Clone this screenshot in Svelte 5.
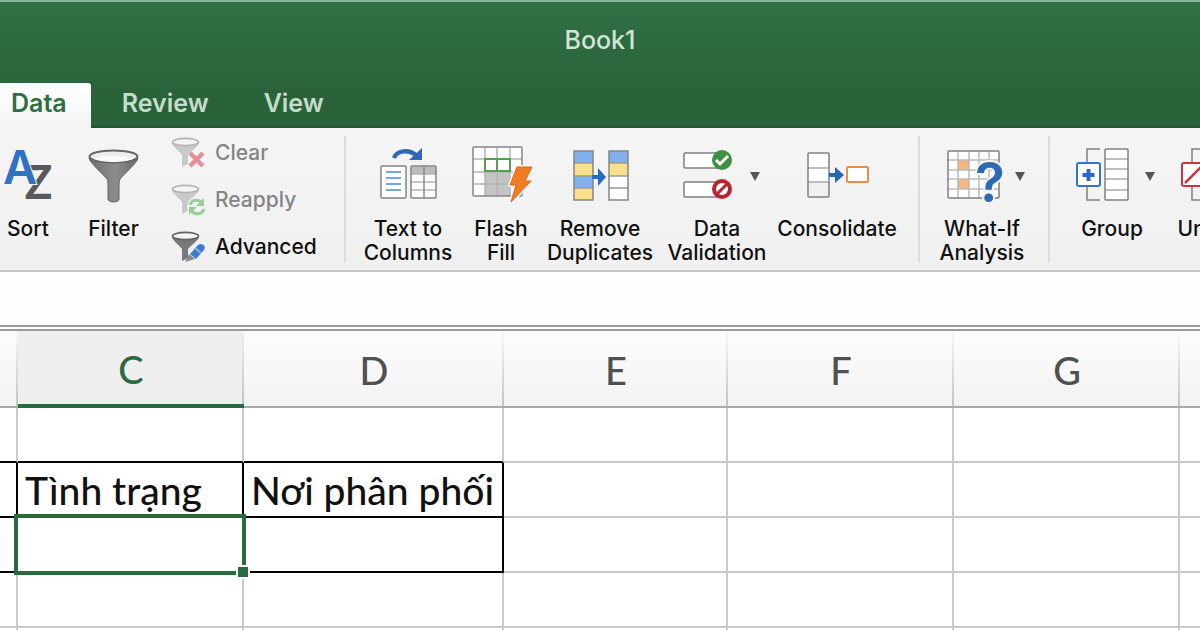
<script lang="ts">
	interface Cell {
		text?: string;
		right?: boolean;
		bottom?: boolean;
	}

	const tabs = ['Data', 'Review', 'View'];
	const columns = ['', 'C', 'D', 'E', 'F', 'G', ''];

	const rows: Cell[][] = [
		[{ bottom: true }, { bottom: true }, { bottom: true }, {}, {}, {}, {}],
		[
			{ right: true, bottom: true },
			{ text: 'Tình trạng', right: true, bottom: true },
			{ text: 'Nơi phân phối', right: true, bottom: true },
			{},
			{},
			{},
			{}
		],
		[
			{ right: true, bottom: true },
			{ right: true, bottom: true },
			{ right: true, bottom: true },
			{},
			{},
			{},
			{}
		],
		[{}, {}, {}, {}, {}, {}, {}],
		[{}, {}, {}, {}, {}, {}, {}]
	];

	let activeTab = $state('Data');
	let selected = $state({ row: 2, col: 1 });
	let formula = $state('');
</script>

{#snippet arrow()}
	<svg class="arrow" viewBox="0 0 10 9" aria-hidden="true"><path d="M0 0h10L5 9z" fill="#555" /></svg>
{/snippet}

{#snippet smallFunnel(dark: boolean)}
	<path d="M1 6c0 3 8 9 10 12v12l6-3v-9c2-3 11-9 11-12z" fill={dark ? '#77797b' : '#c9c9c9'} />
	<ellipse
		cx="14.5"
		cy="5"
		rx="13"
		ry="3.6"
		fill="#f4f4f4"
		stroke={dark ? '#606264' : '#b4b4b4'}
		stroke-width="1.6"
	/>
{/snippet}

<div class="app">
	<header>
		<h1>Book1</h1>
		<div class="tabs" role="tablist">
			{#each tabs as tab}
				<button
					class="tab"
					class:active={activeTab === tab}
					role="tab"
					aria-selected={activeTab === tab}
					onclick={() => (activeTab = tab)}
				>
					{tab}
				</button>
			{/each}
		</div>
	</header>

	<div class="ribbon" role="toolbar" aria-label="Data">
		<div class="group sort-filter">
			<button class="tool">
				<span class="icon-row">
					<svg class="icon" viewBox="0 0 64 64" aria-hidden="true">
						<text class="glyph" x="27" y="55" font-size="47" fill="#58595c">Z</text>
						<text class="glyph letter-a" x="7" y="40" font-size="47" fill="#3070c5">A</text>
					</svg>
				</span>
				<span class="label">Sort</span>
			</button>
			<button class="tool">
				<span class="icon-row">
					<svg class="icon" viewBox="0 0 64 64" aria-hidden="true">
						<defs>
							<linearGradient id="funnel" x1="0" x2="1">
								<stop offset="0" stop-color="#6b6d6f" />
								<stop offset="0.55" stop-color="#8b8d8f" />
								<stop offset="1" stop-color="#68696b" />
							</linearGradient>
						</defs>
						<path
							d="M7 14c0 4 15 17 18 21 1 2 1 4 1 7v13c0 4 11 4 11 0V42c0-3 0-5 1-7 3-4 18-17 18-21z"
							fill="url(#funnel)"
							stroke="#606264"
						/>
						<ellipse cx="31.5" cy="12.5" rx="24" ry="6" fill="#ededee" stroke="#646668" stroke-width="2" />
						<path d="M12 15c8-4 31-4 39 0-8 4-31 4-39 0z" fill="#fafafa" />
					</svg>
				</span>
				<span class="label">Filter</span>
			</button>
			<div class="stack">
				<button class="small" disabled>
					<svg viewBox="0 0 36 32" aria-hidden="true">
						{@render smallFunnel(false)}
						<path d="M20 17l12 12M32 17L20 29" stroke="#f3f3f3" stroke-width="8" />
						<path d="M19 16l13 13M32 16L19 29" stroke="#e2919b" stroke-width="4.5" />
					</svg>
					Clear
				</button>
				<button class="small" disabled>
					<svg viewBox="0 0 36 32" aria-hidden="true">
						{@render smallFunnel(false)}
						<circle cx="26" cy="23" r="10" fill="#f2f2f2" />
						<path d="M19 21c2-6 9-6 12-2M33 25c-2 6-9 6-12 2" fill="none" stroke="#99cc9b" stroke-width="3" />
						<path d="M33 14v8h-8zM18 31v-8h8z" fill="#99cc9b" />
					</svg>
					Reapply
				</button>
				<button class="small">
					<svg viewBox="0 0 36 32" aria-hidden="true">
						{@render smallFunnel(true)}
						<path d="M17 30l3-8 8-8 6 4-10 10z" fill="#f2f2f2" stroke="#f2f2f2" stroke-width="3" />
						<path d="M19 23l8-9c3-3 9 1 6 5l-8 9z" fill="#3a7bd0" />
						<path d="M24 17l6 5" stroke="#8db6e8" stroke-width="2" />
						<path d="M14 31l4-8 6 5z" fill="#87898b" />
					</svg>
					Advanced
				</button>
			</div>
		</div>

		<div class="group data-tools">
			<button class="tool">
				<span class="icon-row">
					<svg class="icon" viewBox="0 0 64 64" aria-hidden="true">
						<path d="M18 14c3-8 15-9 23-2" fill="none" stroke="#2e67b5" stroke-width="4.5" />
						<path d="M46 4v12H33z" fill="#2e67b5" />
						<rect x="5" y="22" width="25" height="32" rx="1" fill="#fff" stroke="#858585" stroke-width="1.5" />
						<path d="M10 28h15M10 34h15M10 40h15M10 46h15" stroke="#75a5e5" stroke-width="2" />
						<rect x="35" y="22" width="25" height="32" rx="1" fill="#fff" />
						<path d="M35 22h25v8H35z" fill="#bcbcbc" />
						<path d="M35 30h25M35 38h25M35 46h25" stroke="#b5b5b5" stroke-width="1.5" />
						<path d="M48 22v32" stroke="#8c8c8c" stroke-width="1.5" />
						<rect x="35" y="22" width="25" height="32" rx="1" fill="none" stroke="#858585" stroke-width="1.5" />
					</svg>
				</span>
				<span class="label">Text to Columns</span>
			</button>
			<button class="tool">
				<span class="icon-row">
					<svg class="icon" viewBox="0 0 64 64" aria-hidden="true">
						<rect x="4" y="3" width="49" height="49" fill="#fff" />
						<path d="M16 28h25v24H16z" fill="#c4c4c4" />
						<path d="M4 15h49M4 28h49M4 40h49M16 3v49M28 3v49M41 3v49" stroke="#b4b4b4" stroke-width="1.5" />
						<rect x="4" y="3" width="49" height="49" rx="1" fill="none" stroke="#878787" stroke-width="1.5" />
						<path d="M16 15h25v12H16zM28 15v12" fill="#fff" stroke="#55a04d" stroke-width="2" />
						<path
							d="M48 23h15l-7 14h6L42 58l5-17h-6z"
							fill="#f07d24"
							stroke="#f5f5f5"
							stroke-width="4"
							stroke-linejoin="round"
						/>
						<path d="M48 23h15l-7 14h6L42 58l5-17h-6z" fill="#f07d24" stroke="#df6b17" />
					</svg>
				</span>
				<span class="label">Flash Fill</span>
			</button>
			<button class="tool">
				<span class="icon-row">
					<svg class="icon" viewBox="0 0 64 64" aria-hidden="true">
						<path d="M6 7h19v12H6zM6 32h19v12H6zM41 7h19v12H41z" fill="#82b0ef" />
						<path d="M6 19h19v13H6zM6 44h19v12H6zM41 19h19v13H41z" fill="#fae08c" />
						<path d="M41 32h19v24H41z" fill="#fff" />
						<path
							d="M6 19h19M6 32h19M6 44h19M41 19h19M41 32h19M41 44h19"
							stroke="#999"
							stroke-width="1.5"
						/>
						<path d="M6 7h19v49H6zM41 7h19v49H41z" fill="none" stroke="#858585" stroke-width="1.5" />
						<path d="M24 31h6v-7l8 9-8 9v-7h-6z" fill="#2469ce" />
					</svg>
				</span>
				<span class="label">Remove Duplicates</span>
			</button>
			<button class="tool" aria-haspopup="menu">
				<span class="icon-row">
					<svg class="icon" viewBox="0 0 64 64" aria-hidden="true">
						<rect x="10" y="9" width="36" height="15" rx="1" fill="#fff" stroke="#808080" stroke-width="1.5" />
						<rect x="10" y="38" width="36" height="15" rx="1" fill="#fff" stroke="#808080" stroke-width="1.5" />
						<circle cx="48" cy="16" r="10" fill="#3f9142" />
						<path d="M42 16l4 4 8-8" fill="none" stroke="#fff" stroke-width="3" />
						<circle cx="48" cy="45" r="8" fill="#fff" stroke="#b82231" stroke-width="4" />
						<path d="M43 50l10-10" stroke="#b82231" stroke-width="3" />
					</svg>
					{@render arrow()}
				</span>
				<span class="label">Data Validation</span>
			</button>
			<button class="tool">
				<span class="icon-row">
					<svg class="icon" viewBox="0 0 64 64" aria-hidden="true">
						<rect x="3" y="9" width="21" height="44" rx="1" fill="#fff" />
						<path d="M3 38h21v15H3z" fill="#f0f0f0" />
						<path d="M3 24h21M3 38h21" stroke="#aaa" stroke-width="1.5" />
						<rect x="3" y="9" width="21" height="44" rx="1" fill="none" stroke="#808080" stroke-width="1.5" />
						<path d="M24 29h6v-6l9 8-9 8v-6h-6z" fill="#2866b9" />
						<rect x="42" y="23" width="21" height="15" rx="1" fill="#fff" stroke="#ee8b48" stroke-width="2" />
					</svg>
				</span>
				<span class="label">Consolidate</span>
			</button>
		</div>

		<div class="group">
			<button class="tool wide" aria-haspopup="menu">
				<span class="icon-row">
					<svg class="icon" viewBox="0 0 64 64" aria-hidden="true">
						<rect x="9" y="7" width="51" height="47" fill="#fff" />
						<path d="M19 16h11v10H19zM19 35h11v10H19z" fill="#f5b57c" />
						<path
							d="M9 16h51M9 26h51M9 35h51M9 45h51M19 7v47M30 7v47M40 7v47M50 7v47"
							stroke="#bbb"
							stroke-width="1.5"
						/>
						<rect x="9" y="7" width="51" height="47" rx="1" fill="none" stroke="#808080" stroke-width="1.5" />
						<text class="glyph question" x="36" y="58" font-size="55" fill="#2e69b4">?</text>
					</svg>
					{@render arrow()}
				</span>
				<span class="label">What-If Analysis</span>
			</button>
		</div>

		<div class="group">
			<button class="tool wide" aria-haspopup="menu">
				<span class="icon-row">
					<svg class="icon" viewBox="0 0 64 64" aria-hidden="true">
						<path d="M31 5H18v51h13" fill="none" stroke="#808080" stroke-width="1.5" />
						<rect x="36" y="5" width="23" height="51" rx="1" fill="#fff" />
						<path d="M36 15h23M36 25h23M36 35h23M36 46h23" stroke="#aaa" stroke-width="1.5" />
						<rect x="36" y="5" width="23" height="51" rx="1" fill="none" stroke="#808080" stroke-width="1.5" />
						<rect x="8" y="19" width="23" height="23" rx="2" fill="#fff" stroke="#3375ce" stroke-width="2" />
						<path d="M19.5 25v12M13.5 31h12" stroke="#2869c4" stroke-width="4" />
					</svg>
					{@render arrow()}
				</span>
				<span class="label">Group</span>
			</button>
			<button class="tool ungroup" aria-haspopup="menu">
				<span class="icon-row">
					<svg class="icon" viewBox="0 0 64 64" aria-hidden="true">
						<path d="M31 5H14v51h17" fill="none" stroke="#808080" stroke-width="1.5" />
						<rect x="36" y="5" width="23" height="51" rx="1" fill="#fff" stroke="#808080" stroke-width="1.5" />
						<rect x="4" y="19" width="23" height="23" rx="2" fill="#fff" stroke="#cf3340" stroke-width="2" />
						<path d="M7 39l17-17" stroke="#cf3340" stroke-width="2.5" />
					</svg>
					{@render arrow()}
				</span>
				<span class="label">Ungroup</span>
			</button>
		</div>
	</div>

	<input class="formula" aria-label="Formula bar" bind:value={formula} />

	<main>
		<table>
			<colgroup>
				<col class="col-b" />
				<col class="col-c" />
				<col class="col-d" />
				<col class="col-e" />
				<col class="col-f" />
				<col class="col-g" />
				<col />
			</colgroup>
			<thead>
				<tr>
					{#each columns as column, i}
						<th scope="col" class:selected={selected.col === i}>{column}</th>
					{/each}
				</tr>
			</thead>
			<tbody>
				{#each rows as row, r}
					<tr>
						{#each row as cell, c}
							<td
								class:right={cell.right}
								class:bottom={cell.bottom}
								onclick={() => (selected = { row: r, col: c })}
							>
								{cell.text ?? ''}
								{#if selected.row === r && selected.col === c}
									<div class="selection"><span class="handle"></span></div>
								{/if}
							</td>
						{/each}
					</tr>
				{/each}
			</tbody>
		</table>
	</main>
</div>

<style>
	:global(body) {
		margin: 0;
	}

	.app {
		display: flex;
		flex-direction: column;
		height: 100vh;
		overflow: hidden;
		background: #fff;
		font-family: Inter, 'Liberation Sans', sans-serif;
	}

	button {
		border: none;
		background: none;
		padding: 0;
		margin: 0;
		color: inherit;
		font: inherit;
	}

	header {
		flex: none;
		border-top: 2px solid #8ab79b;
		background: linear-gradient(#2f7145, #2a6339 70%, #2a6238);
		box-shadow: inset 0 -2px 0 #225530;
	}

	h1 {
		margin: 0 0 5px;
		color: #d3e5d8;
		font-size: 25px;
		font-weight: 500;
		line-height: 76px;
		text-align: center;
	}

	.tabs {
		display: flex;
		height: 45px;
	}

	.tab {
		padding: 0 24px 5px 31px;
		color: #c5dccb;
		font-size: 25px;
		font-weight: 600;
	}

	.tab:first-child {
		padding-left: 11px;
	}

	.tab.active {
		border-top-right-radius: 3px;
		background: linear-gradient(#fff, #f4f4f4);
		color: #2d6e43;
	}

	.ribbon {
		display: flex;
		flex: none;
		height: 142px;
		border-bottom: 2px solid #c6c6c6;
		background: linear-gradient(#f5f5f5, #f0f0f0);
		color: #111;
		font-size: 21px;
		font-weight: 500;
		line-height: 24px;
	}

	.group {
		position: relative;
		display: flex;
		flex: none;
	}

	.group + .group::before {
		content: '';
		width: 2px;
		height: 126px;
		margin-top: 8px;
		background: #dcdcdc;
	}

	.sort-filter {
		display: grid;
		grid-template-columns: 56px 115px 173px;
	}

	.data-tools {
		display: grid;
		grid-template-columns: 10px 108px 78px 120px 114px 144px;
	}

	.data-tools .tool:last-child {
		padding-right: 18px;
	}

	.tool {
		display: flex;
		flex-direction: column;
		align-items: center;
		gap: 9px;
		padding-top: 16px;
	}

	.tool.wide {
		width: 124px;
	}

	.group:nth-child(3) {
		width: 130px;
	}

	.tool.ungroup {
		width: 94px;
	}

	.icon-row {
		display: flex;
		justify-content: center;
		align-items: center;
		gap: 12px;
		width: 100%;
		height: 64px;
	}

	.icon {
		flex: none;
		width: 64px;
		height: 64px;
		overflow: visible;
	}

	.arrow {
		flex: none;
		width: 10px;
		height: 9px;
	}

	.glyph {
		font-family: Inter, sans-serif;
		font-weight: 600;
	}

	.letter-a {
		stroke: #f3f3f3;
		stroke-width: 2px;
		paint-order: stroke;
	}

	.question {
		stroke: #f3f3f3;
		stroke-width: 4px;
		paint-order: stroke;
	}

	.stack {
		display: flex;
		flex-direction: column;
		padding-top: 1px;
	}

	.small {
		display: flex;
		align-items: center;
		gap: 8px;
		height: 47px;
	}

	.small svg {
		width: 36px;
		height: 32px;
	}

	.small:disabled {
		color: #858585;
	}

	.formula {
		box-sizing: border-box;
		flex: none;
		width: 100%;
		height: 53px;
		padding: 0 12px;
		border: none;
		outline: none;
		background: #fdfdfd;
		font-size: 24px;
	}

	main {
		flex: 1;
		min-height: 0;
		border-top: 6px double #9a9a9a;
		overflow: hidden;
	}

	table {
		width: 100%;
		border-collapse: separate;
		border-spacing: 0;
		table-layout: fixed;
		font-family: Lato, 'Open Sans', sans-serif;
	}

	.col-b {
		width: 18px;
	}

	.col-c,
	.col-f,
	.col-g {
		width: 226px;
	}

	.col-d {
		width: 260px;
	}

	.col-e {
		width: 224px;
	}

	th {
		box-sizing: border-box;
		height: 77px;
		padding: 2px 0 0;
		border-bottom: 2px solid #ababab;
		background:
			linear-gradient(#f8f8f8, #c4c4c4) right / 2px 100% no-repeat,
			linear-gradient(#fcfcfc, #f3f3f3);
		color: #505050;
		font-size: 38px;
		font-weight: 500;
	}

	th:last-child {
		background: linear-gradient(#fcfcfc, #f3f3f3);
	}

	th.selected {
		border-bottom: 4px solid #2a6a3d;
		background:
			linear-gradient(#f0f0f0, #c4c4c4) right / 2px 100% no-repeat,
			#efefef;
		color: #2a6a3d;
	}

	td {
		position: relative;
		box-sizing: border-box;
		height: 55px;
		padding: 0 0 0 7px;
		border-right: 2px solid #c9c9c9;
		border-bottom: 2px solid #c9c9c9;
		color: #111;
		font-size: 39px;
		font-weight: 500;
		line-height: 50px;
		white-space: nowrap;
	}

	td:first-child {
		padding: 0;
	}

	td:last-child {
		border-right: none;
	}

	td.right {
		border-right-color: #000;
	}

	td.bottom {
		border-bottom-color: #000;
	}

	.selection {
		position: absolute;
		z-index: 1;
		inset: -4px;
		border: 4px solid #2a6a3d;
	}

	.handle {
		position: absolute;
		right: -8px;
		bottom: -8px;
		width: 10px;
		height: 10px;
		border: 2px solid #fff;
		background: #2a6a3d;
	}
</style>
